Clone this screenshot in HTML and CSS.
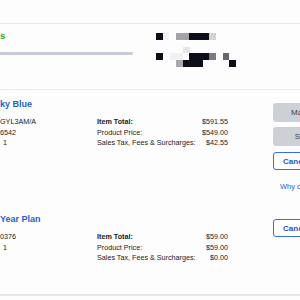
FILE: index.html
```html
<!DOCTYPE html>
<html>
<head>
<meta charset="utf-8">
<link rel="stylesheet" href="styles.css">
</head>
<body>
<div class="page">
  <div class="topbar"></div>
  <div class="status">
    <div class="status-left">
      <div class="status-text">s</div>
      <div class="progress"></div>
    </div>
    <svg class="redacted" width="90" height="50" viewBox="0 0 90 50">
      <rect x="0" y="9" width="7" height="7" fill="#0c0f1a"/>
      <rect x="7" y="9" width="6" height="7" fill="#f1f1f3"/>
      <rect x="20" y="9" width="13" height="7" fill="#a3a3a8"/>
      <rect x="33" y="9" width="20" height="7" fill="#0c0f1a"/>
      <rect x="53" y="9" width="7" height="7" fill="#d2d2d6"/>
      <rect x="27" y="23" width="7" height="6" fill="#e6e6e9"/>
      <rect x="0" y="29" width="7" height="7" fill="#0c0f1a"/>
      <rect x="14" y="29" width="13" height="7" fill="#f1f1f3"/>
      <rect x="33" y="29" width="20" height="7" fill="#0c0f1a"/>
      <rect x="53" y="29" width="7" height="7" fill="#7a7a80"/>
      <rect x="67" y="29" width="6" height="7" fill="#66666c"/>
      <rect x="20" y="36" width="7" height="7" fill="#a8a8ad"/>
      <rect x="27" y="36" width="20" height="7" fill="#0c0f1a"/>
      <rect x="73" y="36" width="7" height="7" fill="#0c0f1a"/>
    </svg>
  </div>

  <div class="item item-first">
    <div class="info">
      <div class="title">ky Blue</div>
      <div class="details">
        <span>GYL3AM/A</span><span class="label strong">Item Total:</span><span class="value">$591.55</span>
        <span>6542</span><span class="label">Product Price:</span><span class="value">$549.00</span>
        <span class="qty">1</span><span class="label">Sales Tax, Fees &amp; Surcharges:</span><span class="value">$42.55</span>
      </div>
    </div>
    <div class="actions">
      <button class="btn btn-gray">Manage</button>
      <button class="btn btn-gray">Share</button>
      <button class="btn btn-outline">Cancel Item</button>
      <a class="why">Why can't I cancel?</a>
    </div>
  </div>

  <div class="item item-second">
    <div class="info">
      <div class="title">Year Plan</div>
      <div class="details">
        <span>0376</span><span class="label strong">Item Total:</span><span class="value">$59.00</span>
        <span class="qty">1</span><span class="label">Product Price:</span><span class="value">$59.00</span>
        <span></span><span class="label">Sales Tax, Fees &amp; Surcharges:</span><span class="value">$0.00</span>
      </div>
    </div>
    <div class="actions">
      <button class="btn btn-outline">Cancel Item</button>
    </div>
  </div>
</div>
</body>
</html>
```

FILE: styles.css
```css
html, body {
  margin: 0;
  padding: 0;
  background: #fdfdfd;
  overflow: hidden;
}
body {
  width: 300px;
  height: 300px;
  font-family: "Liberation Sans", Arial, sans-serif;
  color: #1d1d1f;
}
.page {
  width: 300px;
}
.topbar {
  height: 23px;
  border-bottom: 1px solid #e6e6eb;
}
.status {
  height: 65px;
  border-bottom: 1px solid #e6e6eb;
  display: flex;
  align-items: flex-start;
}
.status-left {
  width: 133px;
  margin-right: 23px;
  padding-top: 6px;
}
.status-text {
  font-size: 9.5px;
  font-weight: bold;
  line-height: 12px;
  height: 12px;
  color: #3f9b24;
}
.progress {
  margin-top: 10px;
  height: 3px;
  background: #c8ccd7;
  border-radius: 0 2px 2px 0;
}
.redacted {
  display: block;
  margin-top: 0;
}
.item {
  display: flex;
  align-items: flex-start;
}
.item-first {
  padding-top: 8px;
  height: 106px;
}
.item-second {
  padding-top: 9px;
  height: 81px;
  border-bottom: 2px solid #e6e6ee;
}
.info {
  width: 273px;
  flex: none;
}
.title {
  font-size: 9px;
  font-weight: bold;
  line-height: 12px;
  color: #1f5fd0;
  white-space: nowrap;
}
.details {
  margin-top: 7px;
  display: grid;
  grid-template-columns: 97px 100px 31px;
  font-size: 7.2px;
  line-height: 10.5px;
  white-space: nowrap;
  color: #1a1a1c;
}
.qty {
  padding-left: 3px;
}
.label.strong {
  font-weight: bold;
}
.value {
  text-align: right;
}
.actions {
  flex: none;
  width: 65px;
  display: flex;
  flex-direction: column;
  align-items: stretch;
  margin-top: 5px;
}
.btn {
  font-family: "Liberation Sans", Arial, sans-serif;
  font-size: 8px;
  height: 19px;
  border-radius: 3px;
  padding: 0;
  margin: 0 0 5px 0;
  text-align: center;
  white-space: nowrap;
}
.btn-gray {
  background: #cdd0d7;
  border: none;
  color: #3e3e44;
}
.btn-outline {
  background: #ffffff;
  border: 1px solid #3a6fd8;
  color: #1f55c8;
  font-weight: bold;
  height: 18px;
  margin-top: 1px;
}
.why {
  margin-top: 7px;
  padding-left: 7px;
  font-size: 7.5px;
  line-height: 10px;
  color: #2563c8;
  white-space: nowrap;
}
```
